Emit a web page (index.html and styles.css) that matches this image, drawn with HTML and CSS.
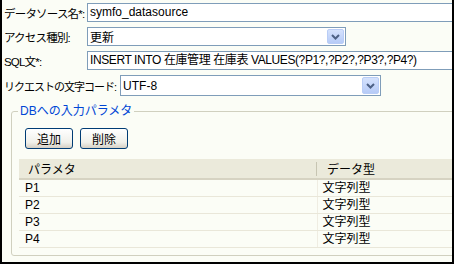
FILE: index.html
```html
<!DOCTYPE html>
<html lang="ja">
<head>
  <meta charset="UTF-8">
  <title>データソース設定</title>
  <link rel="stylesheet" href="styles.css">
</head>
<body>
  <div class="frame">
    <div class="form_row">
      <div class="form_label">データソース名*:</div>
      <div class="text_box wide">symfo_datasource</div>
    </div>
    <div class="form_row">
      <div class="form_label">アクセス種別:</div>
      <div class="select_box">
        <span class="select_text">更新</span>
        <span class="select_btn"><svg width="9" height="6" viewBox="0 0 9 6"><path d="M1 1 L4.5 4.5 L8 1" fill="none" stroke="#4d6185" stroke-width="2"/></svg></span>
      </div>
    </div>
    <div class="form_row">
      <div class="form_label">SQL文*:</div>
      <div class="text_box wide sql_text">INSERT INTO 在庫管理 在庫表 VALUES(?P1?,?P2?,?P3?,?P4?)</div>
    </div>
    <div class="form_row row_charset">
      <div class="form_label auto">リクエストの文字コード:</div>
      <div class="select_box tall">
        <span class="select_text">UTF-8</span>
        <span class="select_btn"><svg width="9" height="6" viewBox="0 0 9 6"><path d="M1 1 L4.5 4.5 L8 1" fill="none" stroke="#4d6185" stroke-width="2"/></svg></span>
      </div>
    </div>

    <fieldset class="param_set">
      <legend>DBへの入力パラメタ</legend>
      <div class="btn_bar">
        <button class="xp_btn">追加</button>
        <button class="xp_btn">削除</button>
      </div>
      <table class="param_table">
        <thead>
          <tr><th class="col_name">パラメタ</th><th class="col_type">データ型</th></tr>
        </thead>
        <tbody>
          <tr><td>P1</td><td>文字列型</td></tr>
          <tr><td>P2</td><td>文字列型</td></tr>
          <tr><td>P3</td><td>文字列型</td></tr>
          <tr><td>P4</td><td>文字列型</td></tr>
        </tbody>
      </table>
    </fieldset>
  </div>
</body>
</html>
```

FILE: styles.css
```css
body {
  margin: 0;
  overflow: hidden;
  font-family: "Liberation Sans", "Noto Sans CJK JP", sans-serif;
  font-size: 12px;
  color: #000;
}
.frame {
  box-sizing: border-box;
  width: 454px;
  height: 264px;
  border-left: 2px solid #000;
  border-right: 2px solid #000;
  border-bottom: 2px solid #000;
  background-color: #fbfdf6;
  overflow: hidden;
  padding-top: 3px;
}
.form_row {
  display: flex;
  align-items: center;
  width: 560px;
  margin-bottom: 5px;
}
.row_charset {
  margin-top: 5px;
  margin-bottom: 0;
}
.form_label {
  width: 83px;
  padding-left: 2px;
  flex: none;
  white-space: nowrap;
  font-size: 11.5px;
  letter-spacing: -0.8px;
}
.form_label.auto {
  width: auto;
  padding-right: 4px;
  font-size: 11px;
  letter-spacing: -1px;
}
.text_box {
  box-sizing: border-box;
  height: 19px;
  line-height: 17px;
  border: 1px solid #7f9db9;
  background-color: #fff;
  padding-left: 2px;
  white-space: nowrap;
}
.wide {
  width: 440px;
}
.sql_text {
  letter-spacing: -0.4px;
}
.select_box {
  box-sizing: border-box;
  display: flex;
  align-items: center;
  width: 259px;
  height: 19px;
  border: 1px solid #7f9db9;
  background-color: #fff;
}
.select_box.tall {
  width: 261px;
  height: 21px;
}
.select_text {
  flex: 1;
  padding-left: 2px;
}
.select_btn {
  box-sizing: border-box;
  display: flex;
  align-items: center;
  justify-content: center;
  width: 17px;
  height: 15px;
  margin-right: 1px;
  border: 1px solid #b9cdf6;
  border-radius: 2px;
  background: linear-gradient(#d5e2fd, #b6cbf7);
}
.select_box.tall .select_btn {
  height: 17px;
}
.param_set {
  width: 560px;
  margin: 8px 0 0 9px;
  padding: 0 0 7px 6px;
  border: 1px solid #d0d0bf;
  border-radius: 3px;
}
.param_set legend {
  padding: 0 2px;
  line-height: 14px;
  color: #0046d5;
}
.btn_bar {
  display: flex;
  gap: 7px;
  margin: 10px 0 0 7px;
}
.xp_btn {
  box-sizing: border-box;
  width: 48px;
  height: 21px;
  padding: 0;
  font-family: "Liberation Sans", "Noto Sans CJK JP", sans-serif;
  font-size: 12px;
  color: #000;
  border: 1px solid #003c74;
  border-radius: 3px;
  background: linear-gradient(#ffffff, #f0f0ea 70%, #d6d0c5);
}
.param_table {
  margin: 10px 0 0 1px;
  width: 500px;
  border-collapse: collapse;
}
.param_table th {
  height: 19px;
  padding: 0;
  text-align: left;
  font-weight: normal;
  background-color: #ebeadb;
  border-bottom: 2px solid #d6d3c2;
}
.col_name {
  width: 298px;
  padding-left: 9px !important;
  box-sizing: border-box;
  background-image: linear-gradient(#c7c5b2, #c7c5b2);
  background-repeat: no-repeat;
  background-size: 1px 14px;
  background-position: right center;
}
.col_type {
  padding-left: 10px !important;
}
.param_table td {
  height: 16px;
  padding: 0 0 0 6px;
  border-bottom: 1px solid #e9e7d9;
  line-height: 16px;
}
.param_table td + td {
  border-left: 1px solid #efede2;
  padding-left: 5px;
}
```
